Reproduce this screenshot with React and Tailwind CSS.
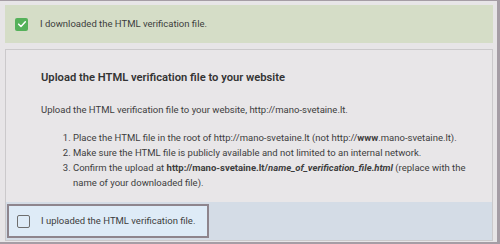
export default function App() {
  return (
    <div className="w-[500px] h-[244px] bg-[#e7e5e7] border-t border-r-[3px] border-b-2 border-[#a59da5] pl-[5px] pt-[4px] pr-[4px] pb-[1px] flex flex-col gap-[6px] font-['Roboto',sans-serif] text-[#3d3d3d]">
      <div className="h-[38px] shrink-0 bg-[#d5ddc7] flex items-center pl-[10px] gap-[12px]">
        <span className="w-[13px] h-[13px] rounded-[2px] bg-[#55b15a] flex items-center justify-center">
          <svg viewBox="0 0 12 12" className="w-[10px] h-[10px]">
            <path d="M2 6.2 L4.8 9 L10 3.4" fill="none" stroke="#fff" strokeWidth="1.8" strokeLinecap="round" strokeLinejoin="round" />
          </svg>
        </span>
        <span className="text-[9.5px]">I downloaded the HTML verification file.</span>
      </div>

      <div className="flex-1 flex flex-col border border-[#cbc9cb] bg-[#e8e6e8]">
        <div className="flex-1 pl-[35px] pt-[21px]">
          <h2 className="text-[11.2px] leading-[14px] font-semibold text-[#333]">
            Upload the HTML verification file to your website
          </h2>
          <p className="mt-[18px] text-[9.5px] leading-[13px]">
            Upload the HTML verification file to your website, http://mano-svetaine.lt.
          </p>
          <ol className="mt-[14px] pl-[32px] text-[9.5px] leading-[15px] list-decimal w-[432px]">
            <li>Place the HTML file in the root of http://mano-svetaine.lt (not http://<b>www</b>.mano-svetaine.lt).</li>
            <li>Make sure the HTML file is publicly available and not limited to an internal network.</li>
            <li>
              Confirm the upload at <b>http://mano-svetaine.lt/<i>name_of_verification_file.html</i></b> (replace with the name of your downloaded file).
            </li>
          </ol>
        </div>
        <div className="h-[38px] shrink-0 bg-[#d4dce6] pl-[1px] py-[2px]">
          <div className="w-[202px] h-full border-2 border-[#8e858d] bg-[#deebf7] flex items-center pl-[8px] gap-[11px]">
            <span className="w-[13px] h-[13px] rounded-[2px] border-[1.5px] border-[#6e6e6e]"></span>
            <span className="text-[9.5px]">I uploaded the HTML verification file.</span>
          </div>
        </div>
      </div>
    </div>
  );
}
